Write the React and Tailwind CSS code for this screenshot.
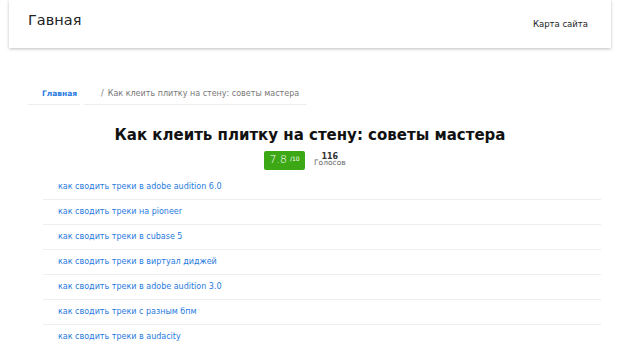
import React from "react";

const links = [
  "как сводить треки в adobe audition 6.0",
  "как сводить треки на pioneer",
  "как сводить треки в cubase 5",
  "как сводить треки в виртуал диджей",
  "как сводить треки в adobe audition 3.0",
  "как сводить треки с разным бпм",
  "как сводить треки в audacity",
];

export default function App() {
  return (
    <div className="w-[620px] h-[343px] overflow-hidden bg-white font-['DejaVu_Sans',sans-serif]">
      {/* Header */}
      <div className="mx-[9px] h-[48px] bg-white shadow-[0_1px_3px_rgba(0,0,0,0.25)] flex justify-between px-[19px]">
        <div className="text-[14.5px] text-[#222] pt-[10px] leading-[20px]">Гавная</div>
        <div className="text-[8.5px] text-[#222] pt-[18px] pr-[4px] leading-[12px]">Карта сайта</div>
      </div>

      {/* Breadcrumb */}
      <div className="mt-[40px] ml-[28px] flex gap-[4px] text-[8px] leading-[12px] whitespace-nowrap">
        <div className="w-[52px] border-b border-[#eee] pl-[14px] pb-[4px]">
          <span className="text-[#1f7ae0] font-bold text-[7.5px]">Главная</span>
        </div>
        <div className="w-[223px] border-b border-[#eee] pl-[17px] pb-[4px] text-[#777]">
          /<span className="ml-[4px]">Как клеить плитку на стену: советы мастера</span>
        </div>
      </div>

      {/* Title */}
      <h1 className="mt-[19px] text-center text-[15px] font-bold text-[#111] leading-[22px]">
        Как клеить плитку на стену: советы мастера
      </h1>

      {/* Rating */}
      <div className="mt-[5px] flex items-center ml-[264px] gap-[9px]">
        <div className="w-[41px] h-[19px] bg-[#3ca816] rounded-[2px] flex items-center justify-center text-white">
          <span className="text-[11px] font-light">7.8</span>
          <span className="text-[6px] ml-[3px] -mt-[5px]">/10</span>
        </div>
        <div className="flex flex-col items-center text-[#444] leading-[6px] -mt-[1px]">
          <span className="text-[8px] font-bold text-[#333]">116</span>
          <span className="text-[7.5px] text-[#666]">Голосов</span>
        </div>
      </div>

      {/* Links */}
      <div className="mt-[5px] ml-[43px] w-[558px]">
        {links.map((t) => (
          <div key={t} className="h-[25px] border-b border-[#eee] flex items-center pl-[15px]">
            <span className="text-[8px] text-[#1f7ae0]">{t}</span>
          </div>
        ))}
      </div>
    </div>
  );
}
